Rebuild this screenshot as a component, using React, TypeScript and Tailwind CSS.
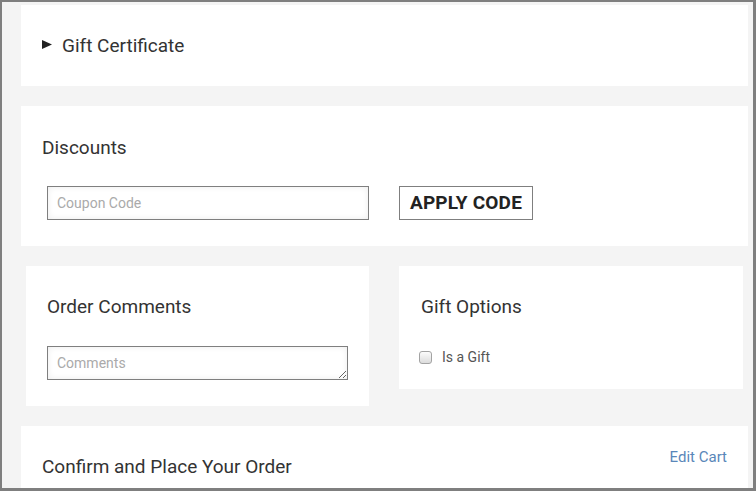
import React from "react";

export default function App() {
  return (
    <div
      className="w-[756px] h-[491px] overflow-hidden bg-[#f4f4f4] border-l-2 border-t-2 border-r-[3px] border-b-[3px] border-[#7f7f7f] pt-[3px] pl-[19px] pr-[5px] text-[#333]"
      style={{ fontFamily: "Roboto, 'Noto Sans', sans-serif" }}
    >
      <div className="flex flex-col gap-[20px]">
        {/* Gift Certificate */}
        <div className="bg-white h-[81px] flex items-center pl-[21px]">
          <svg width="10" height="9" viewBox="0 0 10 9" className="mr-[10px] -mt-[2px]">
            <path d="M0 0 L10 4.5 L0 9 Z" fill="#222" />
          </svg>
          <span className="text-[19px] leading-none">Gift Certificate</span>
        </div>

        {/* Discounts */}
        <div className="bg-white h-[140px] pl-[21px] pt-[32px]">
          <h2 className="text-[19px] leading-[20px] h-[20px]">Discounts</h2>
          <div className="flex items-start mt-[28px] pl-[5px] gap-[30px]">
            <input
              placeholder="Coupon Code"
              className="w-[322px] h-[34px] border border-[#7f7f7f] shadow-[inset_0_0_6px_rgba(0,0,0,0.08)] px-[9px] text-[14px] placeholder:text-[#aaa] outline-none"
            />
            <button className="w-[134px] h-[34px] border border-[#7f7f7f] bg-white text-[19px] font-bold text-[#222] tracking-[0.2px]">
              APPLY CODE
            </button>
          </div>
        </div>

        {/* Row */}
        <div className="flex items-start gap-[30px] pl-[5px]">
          <div className="bg-white w-[343px] h-[140px] pl-[21px] pt-[31px]">
            <h2 className="text-[19px] leading-[20px] h-[20px]">Order Comments</h2>
            <textarea
              placeholder="Comments"
              className="block mt-[29px] w-[301px] h-[34px] border border-[#7f7f7f] shadow-[inset_0_0_6px_rgba(0,0,0,0.08)] px-[9px] py-[7px] text-[14px] leading-[18px] placeholder:text-[#aaa] outline-none"
            />
          </div>
          <div className="bg-white w-[344px] h-[123px] pl-[22px] pt-[31px]">
            <h2 className="text-[19px] leading-[20px] h-[20px]">Gift Options</h2>
            <label className="flex items-center mt-[33px] -ml-[2px] gap-[10px] text-[14px] text-[#555]">
              <input
                type="checkbox"
                className="appearance-none w-[13px] h-[13px] m-0 border border-[#a3a3a3] rounded-[3px] bg-gradient-to-b from-[#fcfcfc] to-[#dcdcdc]"
              />
              <span className="leading-none">Is a Gift</span>
            </label>
          </div>
        </div>

        {/* Confirm */}
        <div className="bg-white h-[80px] pl-[21px] pr-[21px] pt-[22px] flex justify-between items-start">
          <h2 className="text-[19px] leading-[20px] mt-[9px]">Confirm and Place Your Order</h2>
          <a className="text-[15px] leading-[18px] text-[#5a87b9]">Edit Cart</a>
        </div>
      </div>
    </div>
  );
}
